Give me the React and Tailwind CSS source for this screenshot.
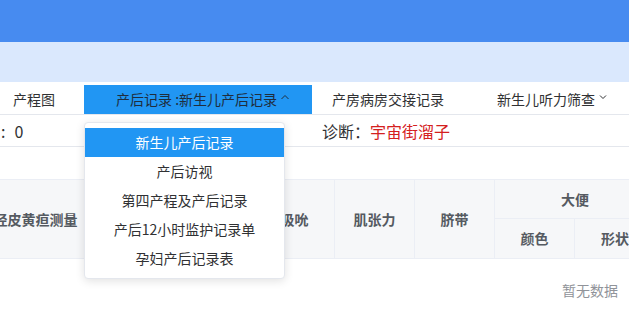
import React from 'react';

const font = { fontFamily: '"Microsoft YaHei", "Noto Sans CJK SC", sans-serif' };

const menuItems = ["新生儿产后记录", "产后访视", "第四产程及产后记录", "产后12小时监护记录单", "孕妇产后记录表"];

const ChevronUp = () => (
    <svg width="10" height="8" viewBox="0 0 10 8" className="ml-[3px] mt-[-6px]">
        <path d="M1.5 6 L5 2.5 L8.5 6" fill="none" stroke="#1f2d3d" strokeWidth="1" />
    </svg>
);

const ChevronDown = () => (
    <svg width="10" height="8" viewBox="0 0 10 8" className="ml-[3px] mt-[-6px]">
        <path d="M2 2.5 L5 5.5 L8 2.5" fill="none" stroke="#303133" strokeWidth="1" />
    </svg>
);

const App = () => {
    return (
        <div className="relative w-[629px] h-[332px] overflow-hidden bg-white text-[#303133]" style={font}>
            <div className="h-[42px] bg-[#478bf0]" />
            <div className="h-[40px] bg-[#dae8fd]" />

            {/* tabs */}
            <div className="h-[33px] flex items-end border-b border-[#e4e7ed] text-[14px]">
                <div className="w-[84px] h-[29px] flex items-center pl-[13px]">产程图</div>
                <div className="w-[228px] h-[29px] flex items-center pl-[32px] bg-[#2196f3] text-[#1f2d3d]">
                    <span>产后记录 :新生儿产后记录</span>
                    <ChevronUp />
                </div>
                <div className="h-[29px] flex items-center pl-[20px] w-[165px]">产房病房交接记录</div>
                <div className="h-[29px] flex items-center pl-[20px]">
                    <span>新生儿听力筛查</span>
                    <ChevronDown />
                </div>
            </div>

            {/* info row */}
            <div className="h-[32px] flex items-center border-b border-[#e4e7ed] text-[16px]">
                <div className="w-[322px] flex items-center">
                    <span className="ml-[1px]">:</span>
                    <span className="ml-[9px]">0</span>
                </div>
                <div className="flex items-center">
                    <span>诊断：</span>
                    <span className="text-[#d42020]">宇宙街溜子</span>
                </div>
            </div>

            {/* table header */}
            <div className="mt-[32px] h-[80px] flex bg-[#f6f7f9] border-t border-b border-[#ebeef5] text-[14px] font-semibold text-[#555a61]">
                <div className="w-[130px] ml-[-29px] shrink-0 flex items-center justify-center border-r border-[#ebeef5]">经皮黄疸测量</div>
                <div className="w-[154px] shrink-0 border-r border-[#ebeef5]" />
                <div className="w-[80px] shrink-0 flex items-center justify-center border-r border-[#ebeef5]">吸吮</div>
                <div className="w-[80px] shrink-0 flex items-center justify-center border-r border-[#ebeef5]">肌张力</div>
                <div className="w-[80px] shrink-0 flex items-center justify-center border-r border-[#ebeef5]">脐带</div>
                <div className="w-[160px] shrink-0 flex flex-col">
                    <div className="h-[39px] flex items-center justify-center border-b border-[#ebeef5]">大便</div>
                    <div className="flex-1 flex">
                        <div className="w-[80px] flex items-center justify-center border-r border-[#ebeef5]">颜色</div>
                        <div className="w-[80px] flex items-center justify-center">形状</div>
                    </div>
                </div>
            </div>

            <div className="flex justify-end pr-[11px] pt-[21px] text-[14px] text-[#909399]">暂无数据</div>

            {/* dropdown */}
            <div className="absolute left-[84px] top-[122px] w-[201px] py-[5px] bg-white border border-[#e4e7ed] rounded-[4px] shadow-[0_2px_10px_rgba(0,0,0,0.12)] text-[14px]">
                {menuItems.map((item, index) => (
                    <div
                        key={index}
                        className={`h-[29px] flex items-center justify-center ${index === 0 ? "bg-[#2196f3] text-white" : "text-[#303133]"}`}
                    >
                        {item}
                    </div>
                ))}
            </div>
        </div>
    );
};

export default App;
